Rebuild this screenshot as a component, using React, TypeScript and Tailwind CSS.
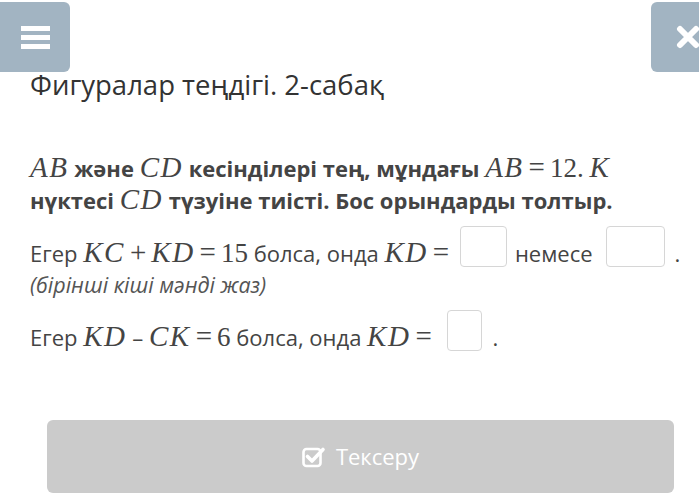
import { FC, ReactNode } from 'react';

const V: FC<{ children: ReactNode }> = ({ children }) => (
  <span className="font-['Liberation_Serif',serif] italic text-[29px] font-normal tracking-[1.5px] leading-none">{children}</span>
);

const N: FC<{ children: ReactNode }> = ({ children }) => (
  <span className="font-['Liberation_Serif',serif] text-[27px] font-normal leading-none">{children}</span>
);

const Op: FC<{ children: ReactNode }> = ({ children }) => (
  <span className="font-['Liberation_Serif',serif] text-[29px] font-normal mx-[5px] leading-none">{children}</span>
);

const Blank: FC<{ w: string }> = ({ w }) => (
  <span className={`inline-block h-[41px] ${w} align-[-5px] rounded-[4px] border border-[#d6d6d6] bg-white`} />
);

const CheckIcon = () => (
  <svg width="24" height="22" viewBox="0 0 24 22" fill="none">
    <rect x="1.5" y="3" width="17" height="17" rx="3" stroke="white" strokeWidth="2.6" />
    <path d="M5.5 10.5 L10 15 L21 3.5" stroke="white" strokeWidth="3.6" strokeLinecap="round" strokeLinejoin="round" />
  </svg>
);

export default function App() {
  return (
    <div className="w-[699px] h-[495px] bg-white overflow-hidden font-['Open_Sans',sans-serif] text-[#3f3f3f]">
      <div className="flex justify-between pt-[2px] h-[72px]">
        <div className="w-[70px] h-[70px] bg-[#a2b4c2] rounded-r-[6px] flex flex-col items-center justify-center gap-[4px]">
          <div className="w-[29px] h-[5px] bg-white" />
          <div className="w-[29px] h-[5px] bg-white" />
          <div className="w-[29px] h-[5px] bg-white" />
        </div>
        <div className="w-[48px] h-[70px] bg-[#a2b4c2] rounded-l-[6px] flex items-center pl-[24px] overflow-hidden">
          <svg width="26" height="26" viewBox="0 0 26 26" className="shrink-0">
            <path d="M5 5 L21 21 M21 5 L5 21" stroke="white" strokeWidth="6" strokeLinecap="round" />
          </svg>
        </div>
      </div>

      <div className="px-[30px] -mt-[2px] text-[27.5px] leading-[30px] text-[#333]">Фигуралар теңдігі. 2-сабақ</div>

      <div className="mt-[52px] px-[30px] text-[22px] leading-[32px] font-bold text-[#444] whitespace-nowrap">
        <div>
          <V>AB</V> және <V>CD</V> кесінділері тең, мұндағы <V>AB</V>
          <Op>=</Op>
          <N>12.</N> <V>K</V>
        </div>
        <div>
          нүктесі <V>CD</V> түзуіне тиісті. Бос орындарды толтыр.
        </div>
      </div>

      <div className="mt-[10px] px-[30px] text-[22px] leading-[32px] text-[#444] whitespace-nowrap">
        Егер <V>KC</V>
        <Op>+</Op>
        <V>KD</V>
        <Op>=</Op>
        <N>15</N> болса, онда <V>KD</V>
        <Op>=</Op> <Blank w="w-[47px]" />
        <span className="ml-[8px] mr-[13px]">немесе</span>
        <Blank w="w-[59px]" />
        <span className="ml-[10px]">.</span>
      </div>

      <div className="mt-[2px] px-[30px] text-[21.5px] leading-[28px] italic text-[#555]">(бірінші кіші мәнді жаз)</div>

      <div className="mt-[11px] px-[30px] text-[22px] leading-[32px] text-[#444] whitespace-nowrap">
        Егер <V>KD</V> – <V>CK</V>
        <Op>=</Op>
        <N>6</N> болса, онда <V>KD</V>
        <Op>=</Op> <span className="ml-[5px]" />
        <Blank w="w-[35px]" />
        <span className="ml-[10px]">.</span>
      </div>

      <div className="mt-[67px] ml-[47px] w-[627px] h-[73px] rounded-[6px] bg-[#cbcbcb] flex items-center justify-center gap-[10px] text-white text-[22px]">
        <CheckIcon />
        <span>Тексеру</span>
      </div>
    </div>
  );
}
